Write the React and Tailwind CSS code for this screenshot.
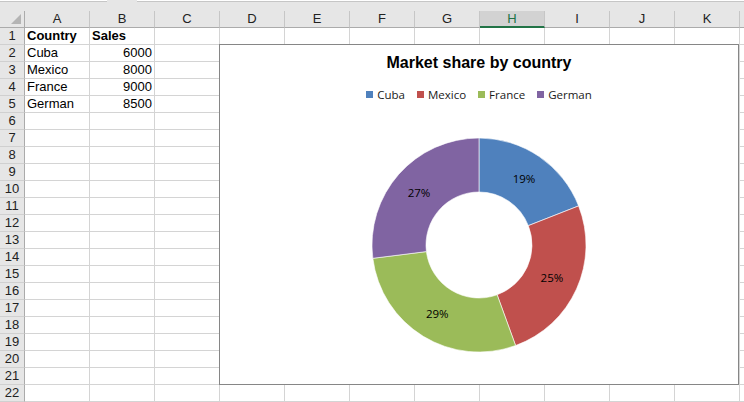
import React from "react";

const COLS = ["A", "B", "C", "D", "E", "F", "G", "H", "I", "J", "K"];
const DATA = {
  1: [{ t: "Country", b: true }, { t: "Sales", b: true }],
  2: [{ t: "Cuba" }, { t: "6000", r: true }],
  3: [{ t: "Mexico" }, { t: "8000", r: true }],
  4: [{ t: "France" }, { t: "9000", r: true }],
  5: [{ t: "German" }, { t: "8500", r: true }],
};
const ROWS = Array.from({ length: 22 }, (_, i) => i + 1);

const SLICES = [
  {
    name: "Cuba",
    color: "#4F81BD",
    d: "M110,3 A107,107 0 0 1 209.60,70.91 L159.34,90.64 A53,53 0 0 0 110,57 Z",
    label: "19%",
    lx: 155.07,
    ly: 43.9,
  },
  {
    name: "Mexico",
    color: "#C0504D",
    d: "M209.60,70.91 A107,107 0 0 1 146.60,210.55 L128.13,159.80 A53,53 0 0 0 159.34,90.64 Z",
    label: "25%",
    lx: 182.9,
    ly: 142.9,
  },
  {
    name: "France",
    color: "#9BBB59",
    d: "M146.60,210.55 A107,107 0 0 1 3.83,123.30 L57.41,116.59 A53,53 0 0 0 128.13,159.80 Z",
    label: "29%",
    lx: 68.28,
    ly: 178.26,
  },
  {
    name: "German",
    color: "#8064A2",
    d: "M3.83,123.30 A107,107 0 0 1 110,3 L110,57 A53,53 0 0 0 57.41,116.59 Z",
    label: "27%",
    lx: 50.03,
    ly: 57.05,
  },
];

function HeaderRow() {
  return (
    <div className="flex h-[17px]">
      <div className="relative w-[25px] h-[17px] shrink-0 bg-[#e6e6e6] border-r border-b border-[#ababab]">
        <svg className="absolute right-[3px] bottom-[3px]" width="10" height="10" viewBox="0 0 10 10">
          <polygon points="10,0 10,10 0,10" fill="#b4b4b4" />
        </svg>
      </div>
      {COLS.map((c) =>
        c === "H" ? (
          <div
            key={c}
            className="w-[65px] h-[17px] shrink-0 bg-[#d2d2d2] border-r border-[#c6c6c6] border-b-2 border-b-[#217346] text-[#217346] text-[13px] leading-[15px] text-center"
          >
            {c}
          </div>
        ) : (
          <div
            key={c}
            className="w-[65px] h-[17px] shrink-0 bg-[#e6e6e6] border-r border-b border-r-[#c6c6c6] border-b-[#ababab] text-[#222] text-[13px] leading-[16px] text-center"
          >
            {c}
          </div>
        )
      )}
      <div className="flex-1 h-[17px] bg-[#e6e6e6] border-b border-[#ababab]" />
    </div>
  );
}

function DataRow({ n }) {
  const cells = DATA[n] || [];
  return (
    <div className="flex h-[17px]">
      <div className="w-[25px] h-[17px] shrink-0 bg-[#e6e6e6] border-r border-r-[#ababab] border-b border-b-[#d0d0d0] text-[13px] leading-[16px] text-center text-[#222]">
        {n}
      </div>
      {COLS.map((c, i) => {
        const cell = cells[i];
        return (
          <div
            key={c}
            className={
              "w-[65px] h-[17px] shrink-0 border-r border-b border-[#d4d4d4] text-[13px] leading-[16px] px-[2px] text-black whitespace-nowrap overflow-hidden " +
              (cell && cell.b ? "font-bold " : "") +
              (cell && cell.r ? "text-right" : "text-left")
            }
          >
            {cell ? cell.t : ""}
          </div>
        );
      })}
      <div className="flex-1 h-[17px] border-b border-[#d4d4d4]" />
    </div>
  );
}

function Chart() {
  return (
    <div className="absolute left-[219px] top-[44px] w-[520px] h-[341px] bg-white border border-[#868686] flex flex-col items-center">
      <div className="mt-[9px] h-[18px] leading-[18px] text-[16px] font-bold text-black font-['Liberation_Sans',Arial,sans-serif]">
        Market share by country
      </div>
      <div className="mt-[15px] h-[15px] flex items-center gap-[12px] font-['Open_Sans',sans-serif] text-[11.5px] leading-[15px] text-[#1a1a1a]">
        {SLICES.map((s) => (
          <div key={s.name} className="flex items-center gap-[4px]">
            <span className="w-[7px] h-[7px]" style={{ backgroundColor: s.color }} />
            <span>{s.name}</span>
          </div>
        ))}
      </div>
      <svg className="mt-[33px]" width="220" height="220" viewBox="0 0 220 220">
        {SLICES.map((s) => (
          <path key={s.name} d={s.d} fill={s.color} stroke="#ffffff" strokeWidth="0.6" />
        ))}
        {SLICES.map((s) => (
          <text
            key={s.name + "l"}
            x={s.lx}
            y={s.ly}
            textAnchor="middle"
            dominantBaseline="central"
            fontSize="11.5"
            fontFamily="'Open Sans', sans-serif"
            fill="#000"
          >
            {s.label}
          </text>
        ))}
      </svg>
    </div>
  );
}

export default function App() {
  return (
    <div className="relative w-[744px] h-[402px] overflow-hidden bg-white font-['Liberation_Sans',Arial,sans-serif]">
      <div className="relative h-[11px] bg-[#e6e6e6]">
        <div className="absolute left-0 top-0 w-[107px] h-[2px] bg-white border-b border-[#c6c6c6]" />
        <div className="absolute left-[137px] right-0 top-0 h-[2px] bg-white border-b border-[#c6c6c6]" />
      </div>
      <HeaderRow />
      {ROWS.map((n) => (
        <DataRow key={n} n={n} />
      ))}
      <Chart />
    </div>
  );
}
